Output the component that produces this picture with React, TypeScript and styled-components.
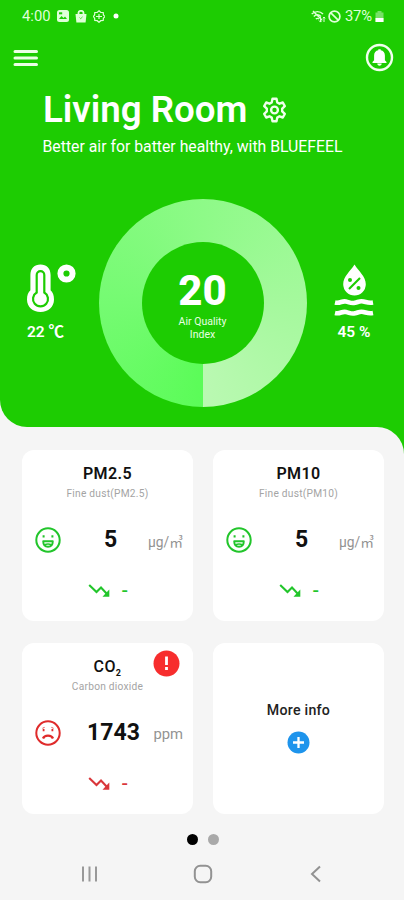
import React from 'react';
import styled, { createGlobalStyle } from 'styled-components';

const GREEN = '#1dcc02';

const Global = createGlobalStyle`
  *, *::before, *::after { box-sizing: border-box; }
  body { margin: 0; background: #f5f5f5; font-family: Roboto, "Noto Sans CJK KR", sans-serif; }
  svg { display: block; flex: none; }
`;

const Screen = styled.div`
  width: 404px;
  height: 900px;
  display: flex;
  flex-direction: column;
  background: #f5f5f5;
  overflow: hidden;
`;

const Hero = styled.header`
  height: 427px;
  background: ${GREEN};
  color: #fff;
  border-bottom-left-radius: 27px;
`;

const StatusBar = styled.div`
  height: 32px;
  padding: 0 20px 0 22px;
  display: flex;
  align-items: center;
  justify-content: space-between;
  color: #dfffd8;
  font-size: 14.8px;
  line-height: 32px;
`;

const StatusGroup = styled.div<{ $gap: number }>`
  display: flex;
  align-items: center;
  gap: ${(p) => p.$gap}px;
`;

const Clock = styled.span`
  width: 29px;
  white-space: nowrap;
`;

const Percent = styled.span`
  width: 28px;
  margin-left: 2px;
  letter-spacing: -0.2px;
  white-space: nowrap;
`;

const AppBar = styled.div`
  height: 51px;
  padding: 0 10.5px 0 13px;
  display: flex;
  align-items: center;
  justify-content: space-between;
`;

const IconButton = styled.button`
  padding: 0;
  border: 0;
  background: none;
  color: inherit;
`;

const Heading = styled.div`
  margin-top: 2px;
  height: 50px;
  padding-left: 43px;
  display: flex;
  align-items: center;
  gap: 13.5px;
`;

const Title = styled.h1`
  margin: 0;
  width: 205px;
  font-size: 36.7px;
  line-height: 50px;
  font-weight: 600;
  white-space: nowrap;
`;

const Subtitle = styled.p`
  margin: 0;
  padding-left: 42.5px;
  height: 24px;
  font-size: 15.8px;
  line-height: 24px;
  white-space: nowrap;
`;

const Gauges = styled.div`
  margin-top: 40px;
  height: 208px;
  padding: 0 29px 0 24px;
  display: grid;
  grid-template-columns: 74.5px 1fr 42px;
`;

const Reading = styled.div<{ $inset: number }>`
  padding-top: 65px;
  padding-left: ${(p) => p.$inset}px;
`;

const ReadingText = styled.div<{ $left: number; $top: number }>`
  padding-left: ${(p) => p.$left}px;
  margin-top: ${(p) => p.$top}px;
  font-size: 15.5px;
  line-height: 20px;
  font-weight: 600;
  white-space: nowrap;
`;

const Ring = styled.div`
  width: 208px;
  height: 208px;
  border-radius: 50%;
  display: flex;
  align-items: center;
  justify-content: center;
  background: conic-gradient(from 180deg, #5bfc58 0deg, #75fb72 90deg, #8efa88 180deg, #a5f99d 270deg, #baf9b2 360deg);
`;

const RingCore = styled.div`
  width: 122px;
  height: 122px;
  border-radius: 50%;
  background: ${GREEN};
  display: flex;
  flex-direction: column;
  align-items: center;
  padding-top: 25px;
`;

const Score = styled.div`
  font-size: 42px;
  line-height: 48px;
  font-weight: 800;
`;

const ScoreLabel = styled.div`
  font-size: 10.5px;
  line-height: 13px;
  text-align: center;
  color: #e8ffe3;
`;

const PanelBack = styled.div`
  background: linear-gradient(90deg, transparent 50%, ${GREEN} 50%) top / 100% 40px no-repeat;
`;

const Panel = styled.main`
  height: 424px;
  padding: 23px 20px 0 22px;
  background: #f5f5f5;
  border-top-right-radius: 27px;
  display: flex;
  flex-direction: column;
  align-items: center;
`;

const Cards = styled.div`
  width: 362px;
  display: grid;
  grid-template-columns: 171px 171px;
  grid-auto-rows: 171px;
  justify-content: space-between;
  row-gap: 21.5px;
`;

const Card = styled.section`
  position: relative;
  background: #fff;
  border-radius: 12px;
`;

const CardTitle = styled.h2<{ $weight: number }>`
  margin: 0;
  padding-top: 13px;
  height: 34px;
  font-size: 16px;
  line-height: 21px;
  font-weight: ${(p) => p.$weight};
  letter-spacing: 0.4px;
  text-align: center;
  color: #111;
`;

const Sub = styled.span`
  position: relative;
  top: 4px;
  font-size: 9px;
  line-height: 0;
  font-weight: 700;
`;

const CardCaption = styled.p`
  margin: 3px 0 0;
  font-size: 10.2px;
  line-height: 14px;
  letter-spacing: 0.25px;
  text-align: center;
  color: #a4a4a4;
`;

const Measure = styled.div`
  margin-top: 22px;
  height: 34px;
  padding: 0 10px 0 13px;
  display: grid;
  grid-template-columns: 26px 1fr 35px;
  align-items: center;
`;

const Value = styled.div<{ $shift: number }>`
  padding-left: ${(p) => p.$shift}px;
  font-size: 23px;
  line-height: 34px;
  font-weight: 700;
  text-align: center;
  color: #111;
`;

const Unit = styled.div<{ $size: number }>`
  padding-top: 3px;
  font-size: ${(p) => p.$size}px;
  line-height: 20px;
  display: flex;
  justify-content: flex-end;
  white-space: nowrap;
  color: #939393;
`;

const Trend = styled.div<{ $color: string }>`
  margin-top: 24px;
  padding-left: 65.5px;
  height: 20px;
  display: flex;
  align-items: center;
  gap: 11px;
  color: ${(p) => p.$color};
  font-size: 19px;
  line-height: 20px;
`;

const Dash = styled.span`
  font-weight: 500;
`;

const Alert = styled.div`
  position: absolute;
  top: 7.5px;
  right: 13px;
`;

const MoreCard = styled(Card)`
  display: flex;
  flex-direction: column;
  align-items: center;
  padding-top: 57px;
`;

const MoreText = styled.div`
  font-size: 14.2px;
  line-height: 20px;
  letter-spacing: 0.25px;
  font-weight: 500;
  color: #222;
  margin-bottom: 11px;
`;

const Pager = styled.div`
  margin-top: 20px;
  display: flex;
  gap: 10px;
`;

const Dot = styled.span<{ $active?: boolean }>`
  width: 11px;
  height: 11px;
  border-radius: 50%;
  background: ${(p) => (p.$active ? '#000' : '#a9a9a9')};
`;

const NavBar = styled.nav`
  height: 49px;
  padding: 0 79px 3px 80px;
  display: grid;
  grid-template-columns: 1fr 20px 1fr;
  align-items: center;

  > :last-child {
    justify-self: end;
    margin-right: 3px;
  }
`;

const Face = ({ happy }: { happy: boolean }) => (
  <svg width="26" height="26" viewBox="0 0 26 26" fill="none" stroke={happy ? '#22c52b' : '#df2b2b'} strokeWidth="2">
    <circle cx="13" cy="13" r="11.7" />
    {happy ? (
      <>
        <path d="M8.200 14.300h9.600c0 3.200-1.900 5.400-4.800 5.400s-4.800-2.200-4.800-5.400z" strokeWidth="1.9" strokeLinejoin="round" />
        <path d="M9.500 17.700q3.500-1.400 7 0" strokeWidth="1.4" />
        <path d="M8.600 8.200v2.200M17.400 8.200v2.200" strokeWidth="2" />
      </>
    ) : (
      <>
        <path d="M8 18.500c1.500-3.800 8.500-3.800 10 0" strokeWidth="2.3" />
        <path d="M7.400 8.300l2.200-.9M18.600 8.300l-2.200-.9" strokeWidth=".8" />
        <path d="M8.600 9v2.200M17.400 9v2.200" strokeWidth="1.8" />
      </>
    )}
  </svg>
);

const TrendDown = () => (
  <svg width="23" height="16" viewBox="0 0 23 16" fill="none" stroke="currentColor" strokeWidth="2.1">
    <path d="M1.200 2l7.300 7 4.500-4.500 6.500 7" />
    <path d="M21.300 6.500v7.300h-6.800z" fill="currentColor" stroke="none" />
  </svg>
);

type MetricProps = {
  title: React.ReactNode;
  caption: string;
  value: string;
  unit: string;
  happy?: boolean;
};

const Metric = ({ title, caption, value, unit, happy = false }: MetricProps) => (
  <Card>
    <CardTitle $weight={happy ? 600 : 500}>{title}</CardTitle>
    <CardCaption>{caption}</CardCaption>
    <Measure>
      <Face happy={happy} />
      <Value $shift={happy ? 12 : 18}>{value}</Value>
      <Unit $size={happy ? 13.8 : 14.8}>{unit}</Unit>
    </Measure>
    <Trend $color={happy ? '#22c52b' : '#d9363a'}>
      <TrendDown />
      <Dash>-</Dash>
    </Trend>
    {!happy && (
      <Alert>
        <svg width="27" height="27" viewBox="0 0 27 27">
          <circle cx="13.5" cy="13.5" r="13" fill="#f72d2d" />
          <path d="M13.500 6.500v8.500M13.500 17v3" stroke="#fff" strokeWidth="2.8" />
        </svg>
      </Alert>
    )}
  </Card>
);

export default function App() {
  return (
    <>
      <Global />
      <Screen>
        <Hero>
          <StatusBar>
            <StatusGroup $gap={6}>
              <Clock>4:00</Clock>
              <svg width="12" height="12" viewBox="0 0 12 12">
                <rect width="12" height="12" rx="2.5" fill="currentColor" />
                <path d="M2 9l2.500-3 2 2 1.500-1.500L10 9z" fill={GREEN} />
                <rect x="2" y="2.3" width="3.2" height="2" fill={GREEN} />
              </svg>
              <svg width="12" height="13" viewBox="0 0 12 13">
                <path d="M.5 4h11l-.9 8.500H1.400z" fill="currentColor" />
                <path d="M3.500 5V2.800a2.500 2 0 015 0V5" fill="none" stroke="currentColor" strokeWidth="1.8" />
                <path d="M4.500 7.500l1.200 1.200L7.600 6.800" fill="none" stroke={GREEN} strokeWidth=".7" />
              </svg>
              <svg width="12" height="13" viewBox="0 0 12 13" fill="none" stroke="currentColor" strokeWidth="1.2">
                <path d="M6 .8l1.800 1.600 2.400.1.200 2.400L12 6.500l-1.600 1.700-.2 2.300-2.400.2L6 12.300l-1.800-1.600-2.400-.2-.2-2.300L.3 6.500l1.300-1.600.2-2.400 2.400-.1z" />
                <path d="M6 4v5M3 6.500h6" />
              </svg>
              <svg width="12" height="6" viewBox="0 0 12 6">
                <circle cx="5" cy="3" r="2.5" fill="#fff" />
              </svg>
            </StatusGroup>
            <StatusGroup $gap={2}>
              <svg width="15" height="13" viewBox="0 0 15 13" fill="none" stroke="currentColor" strokeWidth="1.4">
                <path d="M.7 4C4 .8 9 .8 12 4M2.800 6.500c2.100-2 5-2 7.200 0M4.800 9q1.600-1.300 3.200 0M2 1l9 9" />
                <path d="M9.500 7v5M13 12V7M8 10.500l1.500 1.600 1.400-1.600M11.800 8.300L13 7l1.200 1.300" strokeWidth="1" />
              </svg>
              <svg width="13" height="13" viewBox="0 0 13 13" fill="none" stroke="currentColor" strokeWidth="1.7">
                <circle cx="6.5" cy="6.5" r="5.4" />
                <path d="M2.800 2.800l7.400 7.400" />
              </svg>
              <Percent>37%</Percent>
              <svg width="9" height="12" viewBox="0 0 9 12">
                <path d="M.5 2.500h2V1h4v1.500h2V12h-8z" fill="#fff" opacity=".4" />
                <path d="M.5 8h8v4h-8z" fill="#fff" />
              </svg>
            </StatusGroup>
          </StatusBar>
          <AppBar>
            <IconButton aria-label="Menu">
              <svg width="25" height="18" viewBox="0 0 25 18" stroke="#eaffe5" strokeWidth="3" strokeLinecap="round">
                <path d="M2 2.500h21.500M2 9h21.500M2 15.500h21.500" />
              </svg>
            </IconButton>
            <IconButton aria-label="Notifications">
              <svg width="29" height="29" viewBox="0 0 29 29">
                <circle cx="14.5" cy="14.5" r="12.5" fill="none" stroke="#f2ffef" strokeWidth="2.4" />
                <path d="M7.500 20v-1l1.600-1.700v-4.800c0-2.900 1.600-4.700 4.200-5.200V6.200h2.400v1.100c2.600.5 4.200 2.300 4.200 5.200v4.800l1.600 1.700v1zM12.300 20.500h4.400c0 1.300-.9 2.200-2.200 2.200s-2.200-.9-2.200-2.200z" fill="#fff" />
              </svg>
            </IconButton>
          </AppBar>
          <Heading>
            <Title>Living Room</Title>
            <svg width="25" height="26" viewBox="0 0 25 26" fill="none" stroke="#efffeb" strokeWidth="2.4" strokeLinejoin="round">
              <path d="M10.500 1.800h4l.8 3.600 2.200 1.300 3.300-1.200 2 3.600-2.600 2.500v2.800l2.600 2.500-2 3.600-3.300-1.200-2.200 1.300-.8 3.600h-4l-.8-3.600-2.200-1.300-3.300 1.200-2-3.600 2.600-2.500v-2.800L2.200 9.100l2-3.600 3.300 1.200 2.200-1.300z" />
              <circle cx="12.5" cy="13" r="3.4" />
            </svg>
          </Heading>
          <Subtitle>Better air for batter healthy, with BLUEFEEL</Subtitle>
          <Gauges>
            <Reading $inset={2}>
              <svg width="50" height="50" viewBox="0 0 50 50" fill="none">
                <path d="M1 35.500c0-4.500 1.200-6.800 3.400-9.200V11C4.400 4.500 8.500.5 14.500.5S24.600 4.500 24.600 11v15.300c2.200 2.400 3.400 4.700 3.400 9.200C28 43 22.400 48 14.500 48S1 43 1 35.500z" fill="#fff" />
                <path d="M10.700 28.500V11a3.800 3.800 0 017.600 0v17.500a7.500 7.500 0 11-7.600 0z" stroke={GREEN} strokeWidth="2.200" />
                <circle cx="40.500" cy="9.500" r="6.100" stroke="#fff" strokeWidth="6" />
              </svg>
              <ReadingText $left={1} $top={8}>22 ℃</ReadingText>
            </Reading>
            <Ring>
              <RingCore>
                <Score>20</Score>
                <ScoreLabel>
                  Air Quality
                  <br />
                  Index
                </ScoreLabel>
              </RingCore>
            </Ring>
            <Reading $inset={1}>
              <svg width="40" height="52" viewBox="0 0 40 52" fill="none">
                <path d="M20.500.5c4 6.500 11.300 12 11.300 19.800A11.300 11.300 0 0120.500 31.500 11.300 11.300 0 019.200 20.300C9.200 12.500 16.500 7 20.500.5z" fill="#fff" />
                <path d="M15 25l11-11" stroke={GREEN} strokeWidth="2.200" />
                <circle cx="16" cy="16" r="2" fill={GREEN} />
                <circle cx="24.500" cy="24" r="2" fill={GREEN} />
                <path d="M1 38.500c5.500 1.300 6.500-2 11-1 4 .9 5 2.200 9 1.300 3.500-.8 4.500-2.200 8.500-1.300 3.500.8 5 1.800 9.500 1M1 49c5.500 1.300 6.500-2 11-1 4 .9 5 2.200 9 1.300 3.500-.8 4.500-2.200 8.500-1.300 3.500.8 5 1.800 9.500 1" stroke="#fff" strokeWidth="4.600" />
              </svg>
              <ReadingText $left={3.5} $top={6}>45 %</ReadingText>
            </Reading>
          </Gauges>
        </Hero>
        <PanelBack>
          <Panel>
            <Cards>
              <Metric title="PM2.5" caption="Fine dust(PM2.5)" value="5" unit="μg/㎥" happy />
              <Metric title="PM10" caption="Fine dust(PM10)" value="5" unit="μg/㎥" happy />
              <Metric title={<>CO<Sub>2</Sub></>} caption="Carbon dioxide" value="1743" unit="ppm" />
              <MoreCard>
                <MoreText>More info</MoreText>
                <svg width="23" height="23" viewBox="0 0 23 23">
                  <circle cx="11.500" cy="11.500" r="11" fill="#1e94ec" />
                  <path d="M11.500 6v11M6 11.500h11" stroke="#fff" strokeWidth="2.300" />
                </svg>
              </MoreCard>
            </Cards>
            <Pager>
              <Dot $active />
              <Dot />
            </Pager>
          </Panel>
        </PanelBack>
        <NavBar>
          <svg width="19" height="18" viewBox="0 0 19 18" stroke="#999" strokeWidth="2">
            <path d="M3 1.500v15M9.500 1.500v15M16 1.500v15" />
          </svg>
          <svg width="20" height="20" viewBox="0 0 20 20" fill="none" stroke="#929292" strokeWidth="2">
            <rect x="1.800" y="1.800" width="16.400" height="16.400" rx="5.500" />
          </svg>
          <svg width="12" height="18" viewBox="0 0 12 18" fill="none" stroke="#929292" strokeWidth="2">
            <path d="M10 1.500L2 9l8 7.500" />
          </svg>
        </NavBar>
      </Screen>
    </>
  );
}
